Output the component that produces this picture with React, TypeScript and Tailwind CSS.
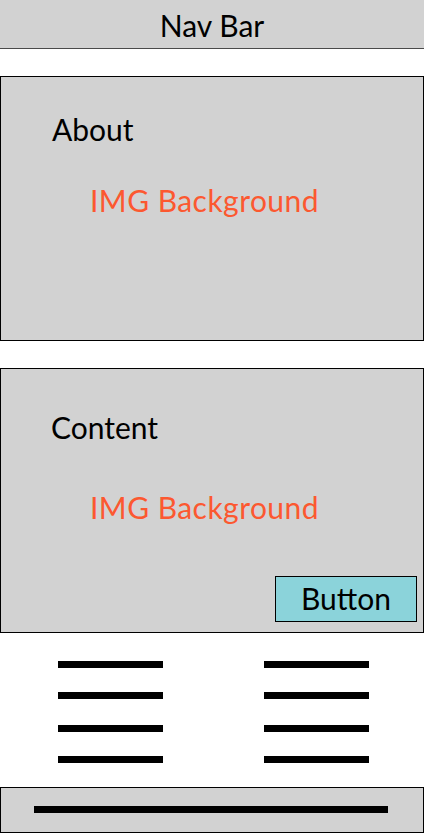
import React from 'react';

const lineGaps = ['mt-0', 'mt-[24px]', 'mt-[26px]', 'mt-[24px]'];

const LineColumn: React.FC = () => (
  <div className="flex flex-col">
    {lineGaps.map((gap, i) => (
      <div key={i} className={`${gap} h-[7px] w-[105px] bg-black`} />
    ))}
  </div>
);

const App: React.FC = () => {
  return (
    <div className="w-[424px] min-h-[833px] bg-white font-['Lato',sans-serif] text-[30px] leading-[36px]">
      {/* nav */}
      <div className="h-[49px] bg-[#d2d2d2] border-b border-[#4a4a4a] pt-[7px] text-center text-black">
        Nav Bar
      </div>

      {/* about */}
      <div className="mt-[27px] h-[265px] bg-[#d2d2d2] border border-black pt-[34px]">
        <div className="pl-[51px] text-black">About</div>
        <div className="mt-[35px] pl-[89px] tracking-[0.45px] text-[#fc5830]">IMG Background</div>
      </div>

      {/* content */}
      <div className="mt-[27px] h-[265px] bg-[#d2d2d2] border border-black pt-[40px] flex flex-col">
        <div className="pl-[50px] text-black">Content</div>
        <div className="mt-[44px] pl-[89px] tracking-[0.45px] text-[#fc5830]">IMG Background</div>
        <button className="mt-auto mb-[10px] mr-[6px] self-end w-[142px] h-[46px] pb-[3px] bg-[#8bd3da] border border-black text-black leading-[36px]">
          Button
        </button>
      </div>

      {/* lists */}
      <div className="mt-[28px] pl-[58px] flex gap-[101px]">
        <LineColumn />
        <LineColumn />
      </div>

      {/* footer */}
      <div className="mt-[24px] h-[46px] bg-[#d2d2d2] border border-black pt-[18px] pl-[33px]">
        <div className="h-[7px] w-[354px] bg-black" />
      </div>
    </div>
  );
};

export default App;
